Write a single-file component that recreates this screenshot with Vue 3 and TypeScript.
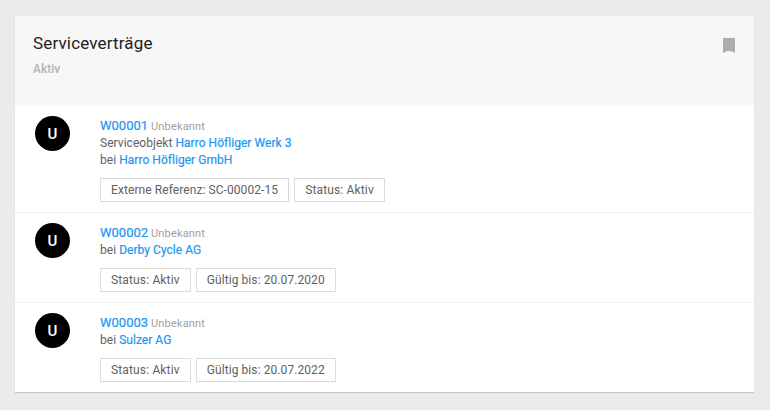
<script setup lang="ts">
interface Contract {
  id: string
  object?: string
  account: string
  tags: string[]
}

const contracts: Contract[] = [
  {
    id: 'W00001',
    object: 'Harro Höfliger Werk 3',
    account: 'Harro Höfliger GmbH',
    tags: ['Externe Referenz: SC-00002-15', 'Status: Aktiv'],
  },
  { id: 'W00002', account: 'Derby Cycle AG', tags: ['Status: Aktiv', 'Gültig bis: 20.07.2020'] },
  { id: 'W00003', account: 'Sulzer AG', tags: ['Status: Aktiv', 'Gültig bis: 20.07.2022'] },
]
</script>

<template>
  <main class="page">
    <section class="card">
      <header class="head">
        <div>
          <h2>Serviceverträge</h2>
          <small>Aktiv</small>
        </div>
        <svg class="bookmark" viewBox="0 0 12 15" aria-hidden="true">
          <path d="M1 0h10a1 1 0 0 1 1 1v14q-6-4-12 0V1a1 1 0 0 1 1-1z" />
        </svg>
      </header>
      <article v-for="c in contracts" :key="c.id" class="item">
        <div class="avatar">U</div>
        <div class="body">
          <div class="line first"><a class="title">{{ c.id }}</a> <span class="kind">Unbekannt</span></div>
          <div v-if="c.object" class="line">Serviceobjekt <a>{{ c.object }}</a></div>
          <div class="line">bei <a>{{ c.account }}</a></div>
          <div class="tags">
            <span v-for="t in c.tags" :key="t" class="tag" :class="{ status: t.startsWith('Status') }">{{ t }}</span>
          </div>
        </div>
      </article>
    </section>
  </main>
</template>

<style>
body {
  background: #ebebeb;
}
</style>

<style scoped>
.page {
  box-sizing: border-box;
  height: 410px;
  padding: 16px 16px 18px 15px;
  font-family: Roboto, sans-serif;
  font-size: 12px;
  line-height: 17px;
  color: #616161;
}
.card {
  background: #fff;
  box-shadow: 0 1px 1px rgba(0, 0, 0, 0.16);
}
.head {
  box-sizing: border-box;
  height: 90px;
  padding: 18px 18px 0;
  display: flex;
  justify-content: space-between;
  background: #f7f7f7;
}
h2 {
  margin: 0;
  font-size: 17px;
  font-weight: 400;
  line-height: 19px;
  letter-spacing: 0.15px;
  color: #212121;
}
small {
  display: block;
  margin-top: 8px;
  font-size: 12px;
  font-weight: 500;
  color: #b4b4b4;
}
.bookmark {
  width: 12px;
  height: 15px;
  margin: 4px 1px 0 0;
  fill: #adadad;
}
.item {
  display: flex;
  padding: 10px 20px;
}
.item + .item {
  border-top: 1px solid #f0f0f0;
}
.avatar {
  width: 35px;
  height: 35px;
  margin-right: 30px;
  border-radius: 50%;
  background: #000;
  color: #fff;
  font-size: 15px;
  font-weight: 500;
  line-height: 36px;
  text-align: center;
}
.line {
  height: 17px;
  letter-spacing: 0.04px;
}
.first {
  padding-top: 1px;
  height: 18px;
  letter-spacing: 0;
}
a {
  color: #2196f3;
  -webkit-text-stroke: 0.2px #2196f3;
}
.title {
  font-size: 13px;
}
.kind {
  font-size: 11px;
  letter-spacing: 0.16px;
  color: #9e9e9e;
}
.tags {
  display: flex;
  gap: 5px;
  margin-top: 9px;
}
.tag {
  box-sizing: border-box;
  height: 24px;
  padding: 0 10px;
  border: 1px solid #dbdbdb;
  line-height: 22px;
  letter-spacing: 0.08px;
}
.status {
  letter-spacing: 0.15px;
}
</style>
